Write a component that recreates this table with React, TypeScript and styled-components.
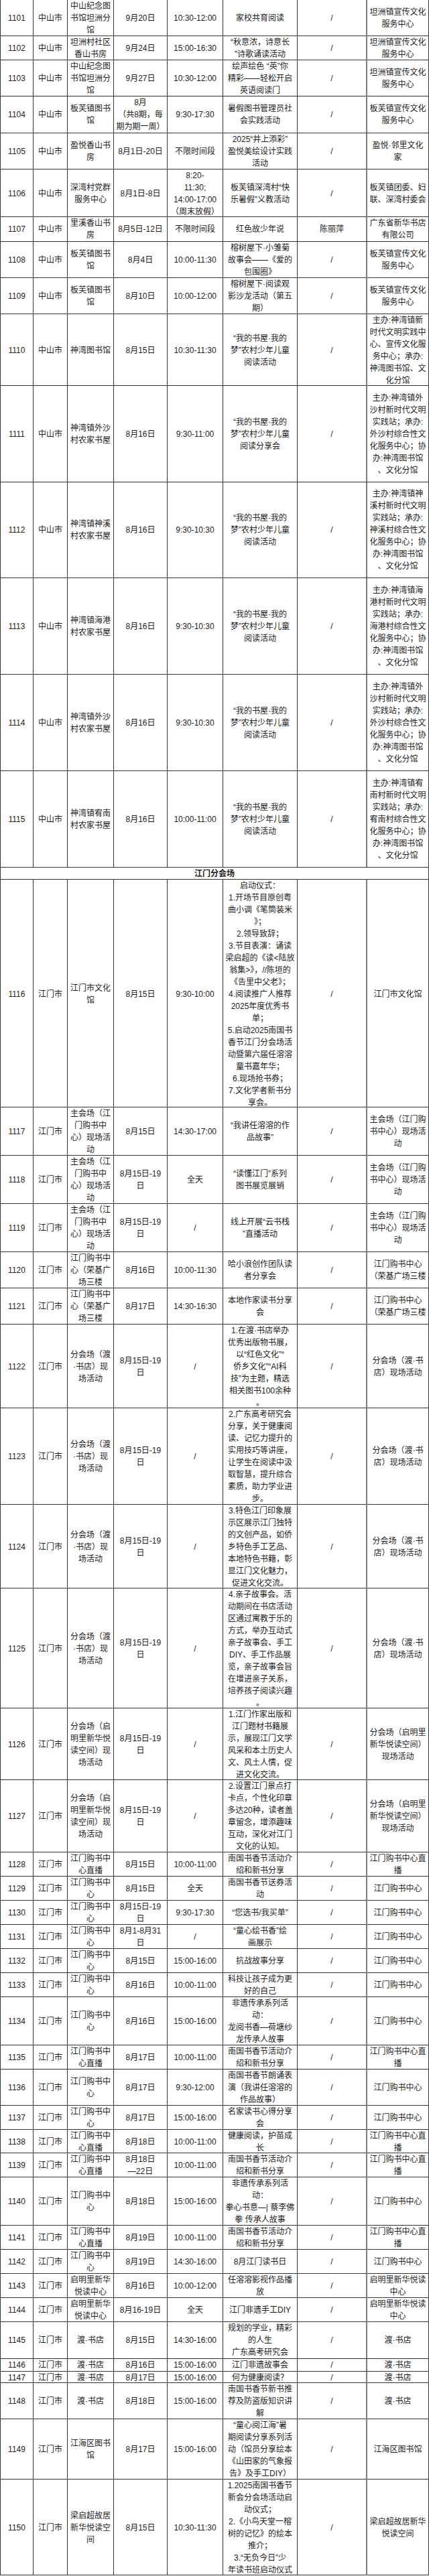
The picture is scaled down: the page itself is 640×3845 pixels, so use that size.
import React from "react";
import styled, { createGlobalStyle } from "styled-components";

const GlobalStyle = createGlobalStyle`
  html, body {
    margin: 0;
    padding: 0;
    background: #ffffff;
  }
  body {
    font-family: "Liberation Sans", "Noto Sans CJK SC", sans-serif;
    color: #1c1c1c;
  }
`;

const Sheet = styled.div`
  width: 640px;
  display: flex;
  flex-direction: column;
  font-size: 12px;
  line-height: 18px;
`;

const Row = styled.div<{ $h: number }>`
  display: grid;
  grid-template-columns: 49px 51px 69px 80px 83px 111px 103px 94px;
  height: ${(p) => p.$h}px;
  box-sizing: border-box;
  border-bottom: 1px solid #333;
`;

const Cell = styled.div<{ $org?: boolean }>`
  display: flex;
  align-items: center;
  justify-content: center;
  text-align: center;
  white-space: pre;
  overflow: visible;
  padding: 0 2px;
  box-sizing: border-box;
  border-left: ${(p) => (p.$org ? "2px solid #7c7c7c" : "1px solid #333")};
  border-right: ${(p) => (p.$org ? "1px solid #333" : "none")};
`;

const Section = styled.div`
  height: 18px;
  box-sizing: border-box;
  display: flex;
  align-items: center;
  justify-content: center;
  font-weight: 700;
  border-left: 1px solid #333;
  border-right: 1px solid #333;
  border-bottom: 1px solid #333;
`;

type Item = {
  no: string;
  city: string;
  venue: string;
  date: string;
  time: string;
  act: string;
  contact?: string;
  org: string;
  h: number;
};

const ZS = "中山市";
const JM = "江门市";
const TZ = "坦洲镇宣传文化\n服务中心";
const BF = "板芙镇宣传文化\n服务中心";
const DREAM = "“我的书屋·我的\n梦”农村少年儿童\n阅读活动";
const shenwan = (a: string, b: string) =>
  `主办:神湾镇${a}\n${b}村新时代文明\n实践站；承办:\n${a}${b}村综合性文\n化服务中心；协\n办:神湾图书馆\n、文化分馆`;
const MAIN = "主会场（江\n门购书中\n心）现场活\n动";
const MAIN_ORG = "主会场（江门购\n书中心）现场活\n动";
const RONGJI = "江门购书中\n心（荣基广\n场三楼";
const RONGJI_ORG = "江门购书中心\n（荣基广场三楼";
const DU = "分会场（渡\n·书店）现\n场活动";
const DU_ORG = "分会场（渡·书\n店）现场活动";
const QM = "分会场（启\n明里新华悦\n读空间）现\n场活动";
const QM_ORG = "分会场（启明里\n新华悦读空间）\n现场活动";
const GS = "江门购书中\n心";
const GS_LIVE = "江门购书中\n心直播";
const GS_ORG = "江门购书中心";
const GS_LIVE_ORG = "江门购书中心直\n播";
const INTRO = "南国书香节活动介\n绍和新书分享";
const D1519 = "8月15日-19\n日";
const DUSHOP = "渡·书店";

const zhongshan: Item[] = [
  { no: "1101", city: ZS, venue: "中山纪念图\n书馆坦洲分\n馆", date: "9月20日", time: "10:30-12:00", act: "家校共育阅读", org: TZ, h: 54 },
  { no: "1102", city: ZS, venue: "坦洲村社区\n香山书房", date: "9月24日", time: "15:00-16:30", act: "“秋意浓，诗意长\n”诗歌诵读活动", org: TZ, h: 36 },
  { no: "1103", city: ZS, venue: "中山纪念图\n书馆坦洲分\n馆", date: "9月27日", time: "10:30-12:00", act: "绘声绘色 “英”你\n精彩——轻松开启\n英语阅读门", org: TZ, h: 54 },
  { no: "1104", city: ZS, venue: "板芙镇图书\n馆", date: "8月\n（共8期，每\n期为期一周）", time: "9:30-17:30", act: "暑假图书管理员社\n会实践活动", org: BF, h: 55 },
  { no: "1105", city: ZS, venue: "盈悦香山书\n房", date: "8月1日-20日", time: "不限时间段", act: "2025“井上添彩”\n盈悦美绘设计实践\n活动", org: "盈悦·邻里文化\n家", h: 54 },
  { no: "1106", city: ZS, venue: "深湾村党群\n服务中心", date: "8月1日-8日", time: "8:20-\n11:30;\n14:00-17:00\n（周末放假）", act: "板芙镇深湾村“快\n乐暑假”义教活动", org: "板芙镇团委、妇\n联、深湾村委会", h: 71 },
  { no: "1107", city: ZS, venue: "里溪香山书\n房", date: "8月5日-12日", time: "不限时间段", act: "红色故少年说", contact: "陈丽萍", org: "广东省新华书店\n有限公司", h: 37 },
  { no: "1108", city: ZS, venue: "板芙镇图书\n馆", date: "8月4日", time: "10:00-11:30", act: "榕树屋下·小雏菊\n故事会——《爱的\n包围圈》", org: BF, h: 54 },
  { no: "1109", city: ZS, venue: "板芙镇图书\n馆", date: "8月10日", time: "10:00-12:00", act: "榕树屋下·阅读观\n影沙龙活动（第五\n期）", org: BF, h: 54 },
  { no: "1110", city: ZS, venue: "神湾图书馆", date: "8月15日", time: "10:30-11:30", act: DREAM, org: "主办:神湾镇新\n时代文明实践中\n心、宣传文化服\n务中心；承办:\n神湾图书馆、文\n化分馆", h: 107 },
  { no: "1111", city: ZS, venue: "神湾镇外沙\n村农家书屋", date: "8月16日", time: "9:30-11:00", act: "“我的书屋·我的\n梦”农村少年儿童\n阅读分享会", org: shenwan("外", "沙"), h: 144 },
  { no: "1112", city: ZS, venue: "神湾镇神溪\n村农家书屋", date: "8月16日", time: "9:30-10:30", act: DREAM, org: shenwan("神", "溪"), h: 143 },
  { no: "1113", city: ZS, venue: "神湾镇海港\n村农家书屋", date: "8月16日", time: "9:30-10:30", act: DREAM, org: shenwan("海", "港"), h: 144 },
  { no: "1114", city: ZS, venue: "神湾镇外沙\n村农家书屋", date: "8月16日", time: "9:30-10:30", act: DREAM, org: shenwan("外", "沙"), h: 144 },
  { no: "1115", city: ZS, venue: "神湾镇宥南\n村农家书屋", date: "8月16日", time: "10:00-11:00", act: DREAM, org: shenwan("宥", "南"), h: 144 },
];

const jiangmen: Item[] = [
  {
    no: "1116", city: JM, venue: "江门市文化\n馆", date: "8月15日", time: "9:30-10:00",
    act: "启动仪式：\n1.开场节目原创粤\n曲小调《笔筒装米\n》；\n2.领导致辞；\n3.节目表演：诵读\n梁启超的《读<陆放\n翁集>》，//陈垣的\n《告里中父老》；\n4.阅读推广人推荐\n2025年度优秀书\n单；\n5.启动2025南国书\n香节江门分会场活\n动暨第六届任溶溶\n童书嘉年华；\n6.现场抢书券；\n7.文化学者新书分\n享会。",
    org: "江门市文化馆", h: 340,
  },
  { no: "1117", city: JM, venue: MAIN, date: "8月15日", time: "14:30-17:00", act: "“我讲任溶溶的作\n品故事”", org: MAIN_ORG, h: 72 },
  { no: "1118", city: JM, venue: MAIN, date: D1519, time: "全天", act: "“读懂江门”系列\n图书展览展销", org: MAIN_ORG, h: 72 },
  { no: "1119", city: JM, venue: MAIN, date: D1519, time: "/", act: "线上开展“云书栈\n”直播活动", org: MAIN_ORG, h: 72 },
  { no: "1120", city: JM, venue: RONGJI, date: "8月16日", time: "10:00-11:30", act: "哈小浪创作团队读\n者分享会", org: RONGJI_ORG, h: 54 },
  { no: "1121", city: JM, venue: RONGJI, date: "8月17日", time: "14:30-16:30", act: "本地作家读书分享\n会", org: RONGJI_ORG, h: 54 },
  { no: "1122", city: JM, venue: DU, date: D1519, time: "/", act: "1.在渡·书店举办\n优秀出版物书展，\n以“红色文化”“\n侨乡文化”“AI科\n技”为主题，精选\n相关图书100余种\n。", org: DU_ORG, h: 125 },
  { no: "1123", city: JM, venue: DU, date: D1519, time: "/", act: "2.广东高考研究会\n分享，关于健康阅\n读、记忆力提升的\n实用技巧等讲座，\n让学生在阅读中汲\n取智慧，提升综合\n素质，助力学业进\n步。", org: DU_ORG, h: 144 },
  { no: "1124", city: JM, venue: DU, date: D1519, time: "/", act: "3.特色江门印象展\n示区展示江门独特\n的文创产品，如侨\n乡特色手工艺品、\n本地特色书籍，彰\n显江门文化魅力，\n促进文化交流。", org: DU_ORG, h: 125 },
  { no: "1125", city: JM, venue: DU, date: D1519, time: "/", act: "4.亲子故事会。活\n动期间在书店活动\n区通过寓教于乐的\n方式，举办互动式\n亲子故事会、手工\nDIY、手工作品展\n览，亲子故事会旨\n在增进亲子关系，\n培养孩子阅读兴趣\n。", org: DU_ORG, h: 179 },
  { no: "1126", city: JM, venue: QM, date: D1519, time: "/", act: "1.江门作家出版和\n江门题材书籍展\n示，展现江门文学\n风采和本土历史人\n文、风土人情，促\n进文化交流。", org: QM_ORG, h: 107 },
  { no: "1127", city: JM, venue: QM, date: D1519, time: "/", act: "2.设置江门景点打\n卡点，个性化印章\n多达20种，读者盖\n章留念，增添趣味\n互动，深化对江门\n文化的认知。", org: QM_ORG, h: 108 },
  { no: "1128", city: JM, venue: GS_LIVE, date: "8月15日", time: "10:00-11:00", act: INTRO, org: GS_LIVE_ORG, h: 36 },
  { no: "1129", city: JM, venue: GS, date: "8月15日", time: "全天", act: "南国书香节送券活\n动", org: GS_ORG, h: 36 },
  { no: "1130", city: JM, venue: GS, date: D1519, time: "9:30-17:30", act: "“您选书/我买单”", org: GS_ORG, h: 36 },
  { no: "1131", city: JM, venue: GS, date: "8月1-8月31\n日", time: "/", act: "“童心绘书香”绘\n画展示", org: GS_ORG, h: 36 },
  { no: "1132", city: JM, venue: GS, date: "8月15日", time: "15:00-16:00", act: "抗战故事分享", org: GS_ORG, h: 36 },
  { no: "1133", city: JM, venue: GS, date: "8月16日", time: "10:00-11:00", act: "科技让孩子成为更\n好的自己", org: GS_ORG, h: 36 },
  { no: "1134", city: JM, venue: GS, date: "8月16日", time: "15:00-16:00", act: "非遗传承系列活\n动：\n龙阅书香—荷塘纱\n龙传承人故事", org: GS_ORG, h: 72 },
  { no: "1135", city: JM, venue: GS_LIVE, date: "8月17日", time: "10:00-11:00", act: INTRO, org: GS_LIVE_ORG, h: 36 },
  { no: "1136", city: JM, venue: GS, date: "8月17日", time: "9:30-12:00", act: "南国书香节朗诵表\n演（我讲任溶溶的\n作品故事）", org: GS_ORG, h: 54 },
  { no: "1137", city: JM, venue: GS, date: "8月17日", time: "15:00-16:00", act: "名家读书心得分享\n会", org: GS_ORG, h: 36 },
  { no: "1138", city: JM, venue: GS_LIVE, date: "8月18日", time: "10:00-11:00", act: "健康阅读，护苗成\n长", org: GS_LIVE_ORG, h: 35 },
  { no: "1139", city: JM, venue: GS_LIVE, date: "8月18日\n—22日", time: "10:00-11:00", act: INTRO, org: GS_LIVE_ORG, h: 36 },
  { no: "1140", city: JM, venue: GS, date: "8月18日", time: "15:00-16:00", act: "非遗传承系列活\n动：\n拳心书意—| 蔡李佛\n拳 传承人故事", org: GS_ORG, h: 72 },
  { no: "1141", city: JM, venue: GS_LIVE, date: "8月19日", time: "10:00-11:00", act: INTRO, org: GS_LIVE_ORG, h: 36 },
  { no: "1142", city: JM, venue: GS, date: "8月19日", time: "14:30-16:00", act: "8月江门读书日", org: GS_ORG, h: 36 },
  { no: "1143", city: JM, venue: "启明里新华\n悦读中心", date: "8月16日", time: "10:00-12:00", act: "任溶溶影视作品播\n放", org: "启明里新华悦读\n中心", h: 36 },
  { no: "1144", city: JM, venue: "启明里新华\n悦读中心", date: "8月16-19日", time: "全天", act: "江门非遗手工DIY", org: "启明里新华悦读\n中心", h: 36 },
  { no: "1145", city: JM, venue: DUSHOP, date: "8月15日", time: "14:30-16:00", act: "规划的学业，精彩\n的人生\n广东高考研究会", org: DUSHOP, h: 55 },
  { no: "1146", city: JM, venue: DUSHOP, date: "8月16日", time: "15:00-16:00", act: "江门非遗故事会", org: DUSHOP, h: 19 },
  { no: "1147", city: JM, venue: DUSHOP, date: "8月17日", time: "15:00-16:00", act: "何为健康阅读？", org: DUSHOP, h: 17 },
  { no: "1148", city: JM, venue: DUSHOP, date: "8月18日", time: "15:00-16:00", act: "南国书香节新书推\n荐及防盗版知识讲\n解", org: DUSHOP, h: 54 },
  { no: "1149", city: JM, venue: "江海区图书\n馆", date: "8月17日", time: "15:00-16:00", act: "“童心阅江海”暑\n期阅读分享系列活\n动（馆员分享绘本\n《山田家的气象报\n告》及手工DIY）", org: "江海区图书馆", h: 90 },
  { no: "1150", city: JM, venue: "梁启超故居\n新华悦读空\n间", date: "8月15日", time: "10:30-11:30", act: "1.2025南国书香节\n新会分会场活动启\n动仪式；\n2.《小鸟天堂一榕\n树的记忆》的绘本\n推介；\n3.“无负今日”少\n年读书班启动仪式", org: "梁启超故居新华\n悦读空间", h: 143 },
];

function EventRow({ item }: { item: Item }) {
  return (
    <Row $h={item.h}>
      <Cell>{item.no}</Cell>
      <Cell>{item.city}</Cell>
      <Cell>{item.venue}</Cell>
      <Cell>{item.date}</Cell>
      <Cell>{item.time}</Cell>
      <Cell>{item.act}</Cell>
      <Cell>{item.contact ?? "/"}</Cell>
      <Cell $org>{item.org}</Cell>
    </Row>
  );
}

export default function App() {
  return (
    <>
      <GlobalStyle />
      <Sheet>
        {zhongshan.map((it) => (
          <EventRow key={it.no} item={it} />
        ))}
        <Section>江门分会场</Section>
        {jiangmen.map((it) => (
          <EventRow key={it.no} item={it} />
        ))}
      </Sheet>
    </>
  );
}
